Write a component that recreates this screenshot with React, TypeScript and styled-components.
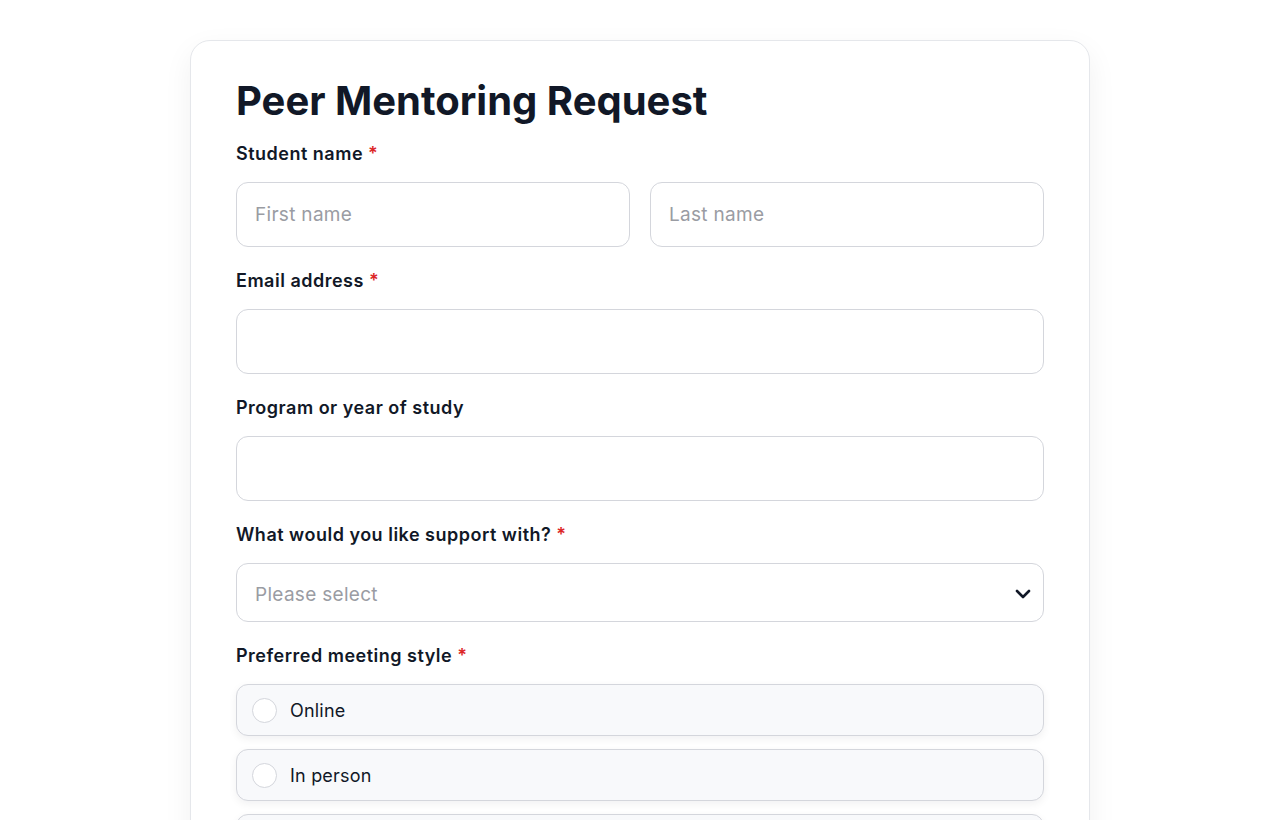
import React from 'react';
import styled, {createGlobalStyle} from 'styled-components';

const GlobalStyle = createGlobalStyle`
  * {
    box-sizing: border-box;
  }
  body {
    margin: 0;
    background: #fff;
    font-family: Inter, "Noto Sans", sans-serif;
    color: #111827;
  }
`;

const Page = styled.div`
  display: flex;
  justify-content: center;
  align-items: flex-start;
  padding: 40px 0 60px;
  height: 820px;
  overflow: hidden;
`;

const Card = styled.form`
  width: 900px;
  padding: 33px 45px 40px;
  border: 1px solid #e5e7eb;
  border-radius: 20px;
  background: #fff;
  box-shadow: 0 10px 30px rgba(17, 24, 39, 0.06);
  display: flex;
  flex-direction: column;
`;

const Title = styled.h1`
  margin: 0 0 14px;
  font-size: 40px;
  line-height: 54px;
  font-weight: 700;
  color: #111827;
`;

const Field = styled.div`
  display: flex;
  flex-direction: column;
  gap: 16px;
  margin-bottom: 22px;
`;

const Label = styled.label`
  font-size: 18px;
  line-height: 24px;
  font-weight: 600;
  letter-spacing: 0.5px;
  color: #111827;
`;

const Required = styled.span`
  color: #dc2626;
  margin-left: 5px;
`;

const Row = styled.div`
  display: grid;
  grid-template-columns: 1fr 1fr;
  gap: 20px;
`;

const Input = styled.input`
  width: 100%;
  height: 65px;
  padding: 0 18px;
  border: 1px solid #d4d6dc;
  border-radius: 12px;
  font-family: inherit;
  font-size: 19px;
  letter-spacing: 0.3px;
  color: #111827;
  background: #fff;
  outline: none;
  &::placeholder {
    color: #9a9ca3;
  }
`;

const SelectBox = styled.div`
  position: relative;
  height: 59px;
  display: flex;
  align-items: center;
  padding: 4px 18px 0;
  border: 1px solid #d4d6dc;
  border-radius: 12px;
  font-size: 19px;
  letter-spacing: 0.3px;
  color: #9a9ca3;
`;

const Chevron = styled.svg`
  position: absolute;
  right: 12px;
  top: 25px;
`;

const Options = styled.div`
  display: flex;
  flex-direction: column;
  gap: 13px;
`;

const Option = styled.label`
  height: 52px;
  display: flex;
  align-items: center;
  gap: 13px;
  padding: 0 15px;
  border: 1px solid #d4d6dc;
  border-radius: 12px;
  background: #f8f9fb;
  box-shadow: 0 3px 8px rgba(17, 24, 39, 0.06);
  font-size: 18px;
  letter-spacing: 0.2px;
  color: #111827;
`;

const Radio = styled.span`
  width: 25px;
  height: 25px;
  border-radius: 50%;
  border: 1px solid #d4d6dc;
  background: #fff;
  flex-shrink: 0;
`;

const meetingStyles = ['Online', 'In person', 'No preference'];

function App() {
  return (
    <>
      <GlobalStyle/>
      <Page>
        <Card>
          <Title>Peer Mentoring Request</Title>
          <Field>
            <Label>Student name<Required>*</Required></Label>
            <Row>
              <Input placeholder="First name"/>
              <Input placeholder="Last name"/>
            </Row>
          </Field>
          <Field>
            <Label>Email address<Required>*</Required></Label>
            <Input type="email"/>
          </Field>
          <Field>
            <Label>Program or year of study</Label>
            <Input/>
          </Field>
          <Field>
            <Label>What would you like support with?<Required>*</Required></Label>
            <SelectBox>
              Please select
              <Chevron width="16" height="10" viewBox="0 0 16 10" fill="none">
                <path d="M2 2l6 6 6-6" stroke="#111827" strokeWidth="2.6" strokeLinecap="round" strokeLinejoin="round"/>
              </Chevron>
            </SelectBox>
          </Field>
          <Field>
            <Label>Preferred meeting style<Required>*</Required></Label>
            <Options>
              {meetingStyles.map(s =>
                <Option key={s}>
                  <Radio/>
                  {s}
                </Option>
              )}
            </Options>
          </Field>
        </Card>
      </Page>
    </>
  );
}

export default App;
